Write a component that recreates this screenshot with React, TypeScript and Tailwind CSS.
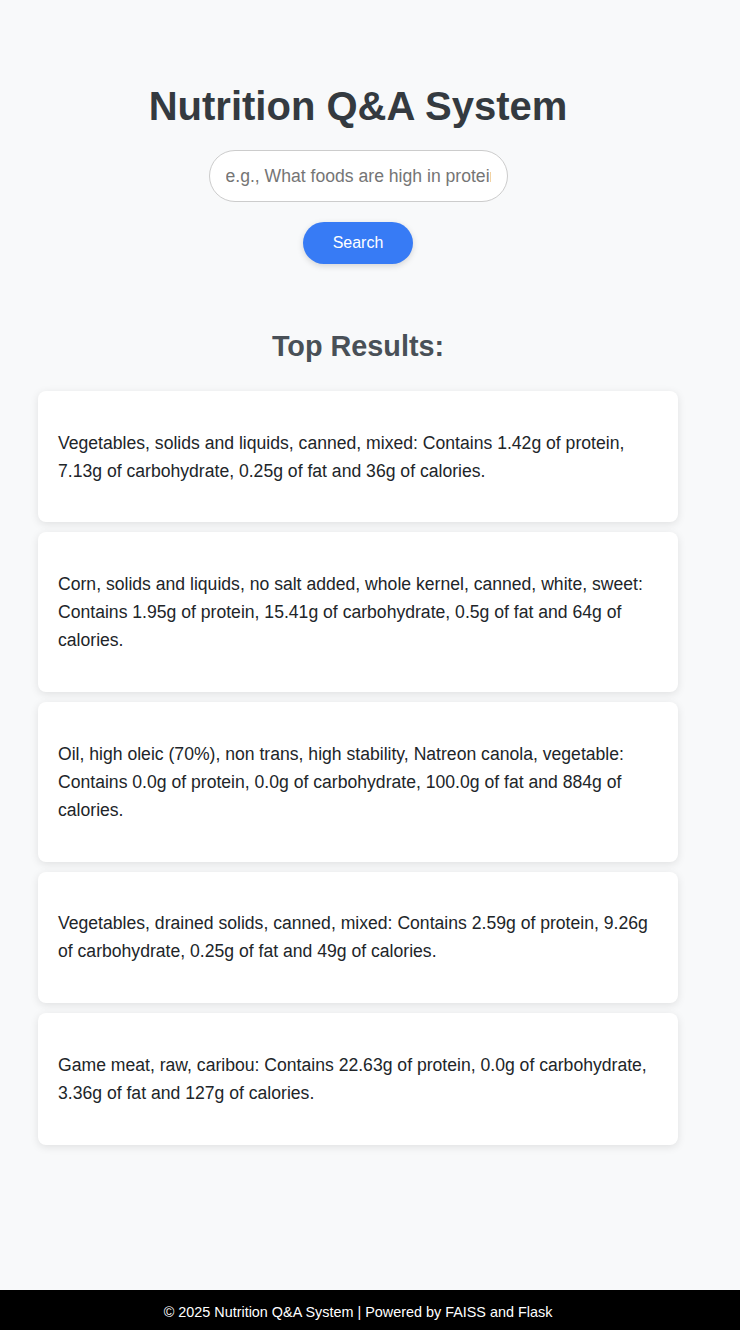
import React, { useState } from 'react';

const results = [
  'Vegetables, solids and liquids, canned, mixed: Contains 1.42g of protein, 7.13g of carbohydrate, 0.25g of fat and 36g of calories.',
  'Corn, solids and liquids, no salt added, whole kernel, canned, white, sweet: Contains 1.95g of protein, 15.41g of carbohydrate, 0.5g of fat and 64g of calories.',
  'Oil, high oleic (70%), non trans, high stability, Natreon canola, vegetable: Contains 0.0g of protein, 0.0g of carbohydrate, 100.0g of fat and 884g of calories.',
  'Vegetables, drained solids, canned, mixed: Contains 2.59g of protein, 9.26g of carbohydrate, 0.25g of fat and 49g of calories.',
  'Game meat, raw, caribou: Contains 22.63g of protein, 0.0g of carbohydrate, 3.36g of fat and 127g of calories.',
];

const App: React.FC = () => {
  const [query, setQuery] = useState('');

  return (
    <div
      className="min-h-screen flex flex-col bg-[#f8f9fa] text-[#212529]"
      style={{ fontFamily: '"Liberation Sans", Arial, sans-serif' }}
    >
      <main className="w-[716px] flex flex-col items-center px-[38px] pt-[83px] pb-10">
        {/* Header */}
        <h1 className="text-[40px] leading-[46px] font-bold text-[#343a40]">Nutrition Q&amp;A System</h1>

        {/* Search form */}
        <form
          className="flex flex-col items-center mt-[21px]"
          onSubmit={(e) => e.preventDefault()}
        >
          <input
            type="text"
            value={query}
            onChange={(e) => setQuery(e.target.value)}
            placeholder="e.g., What foods are high in protein?"
            className="w-[299px] h-[52px] px-4 text-[17.6px] rounded-full border border-[#cccccc] bg-white placeholder:text-[#757575] focus:outline-none"
          />
          <button
            type="submit"
            className="mt-5 w-[110px] h-[42px] rounded-full bg-[#377bf5] text-white text-base shadow-[0_2px_6px_rgba(0,0,0,0.15)]"
          >
            Search
          </button>
        </form>

        {/* Results */}
        <h2 className="mt-[66px] text-[28.8px] leading-[33px] font-bold text-[#495057]">Top Results:</h2>

        <div className="mt-[28px] w-full flex flex-col gap-[10px]">
          {results.map((r, i) => (
            <div
              key={i}
              className="bg-white rounded-lg px-5 py-5 shadow-[0_2px_8px_rgba(0,0,0,0.1)]"
            >
              <p className="my-[17.6px] text-[17.6px] leading-[1.6]">{r}</p>
            </div>
          ))}
        </div>
      </main>

      {/* Footer */}
      <footer className="mt-auto h-10 pt-[14px] bg-black text-white text-[14.4px] leading-[17px]">
        <p className="w-[716px] text-center">© 2025 Nutrition Q&amp;A System | Powered by FAISS and Flask</p>
      </footer>
    </div>
  );
};

export default App;
